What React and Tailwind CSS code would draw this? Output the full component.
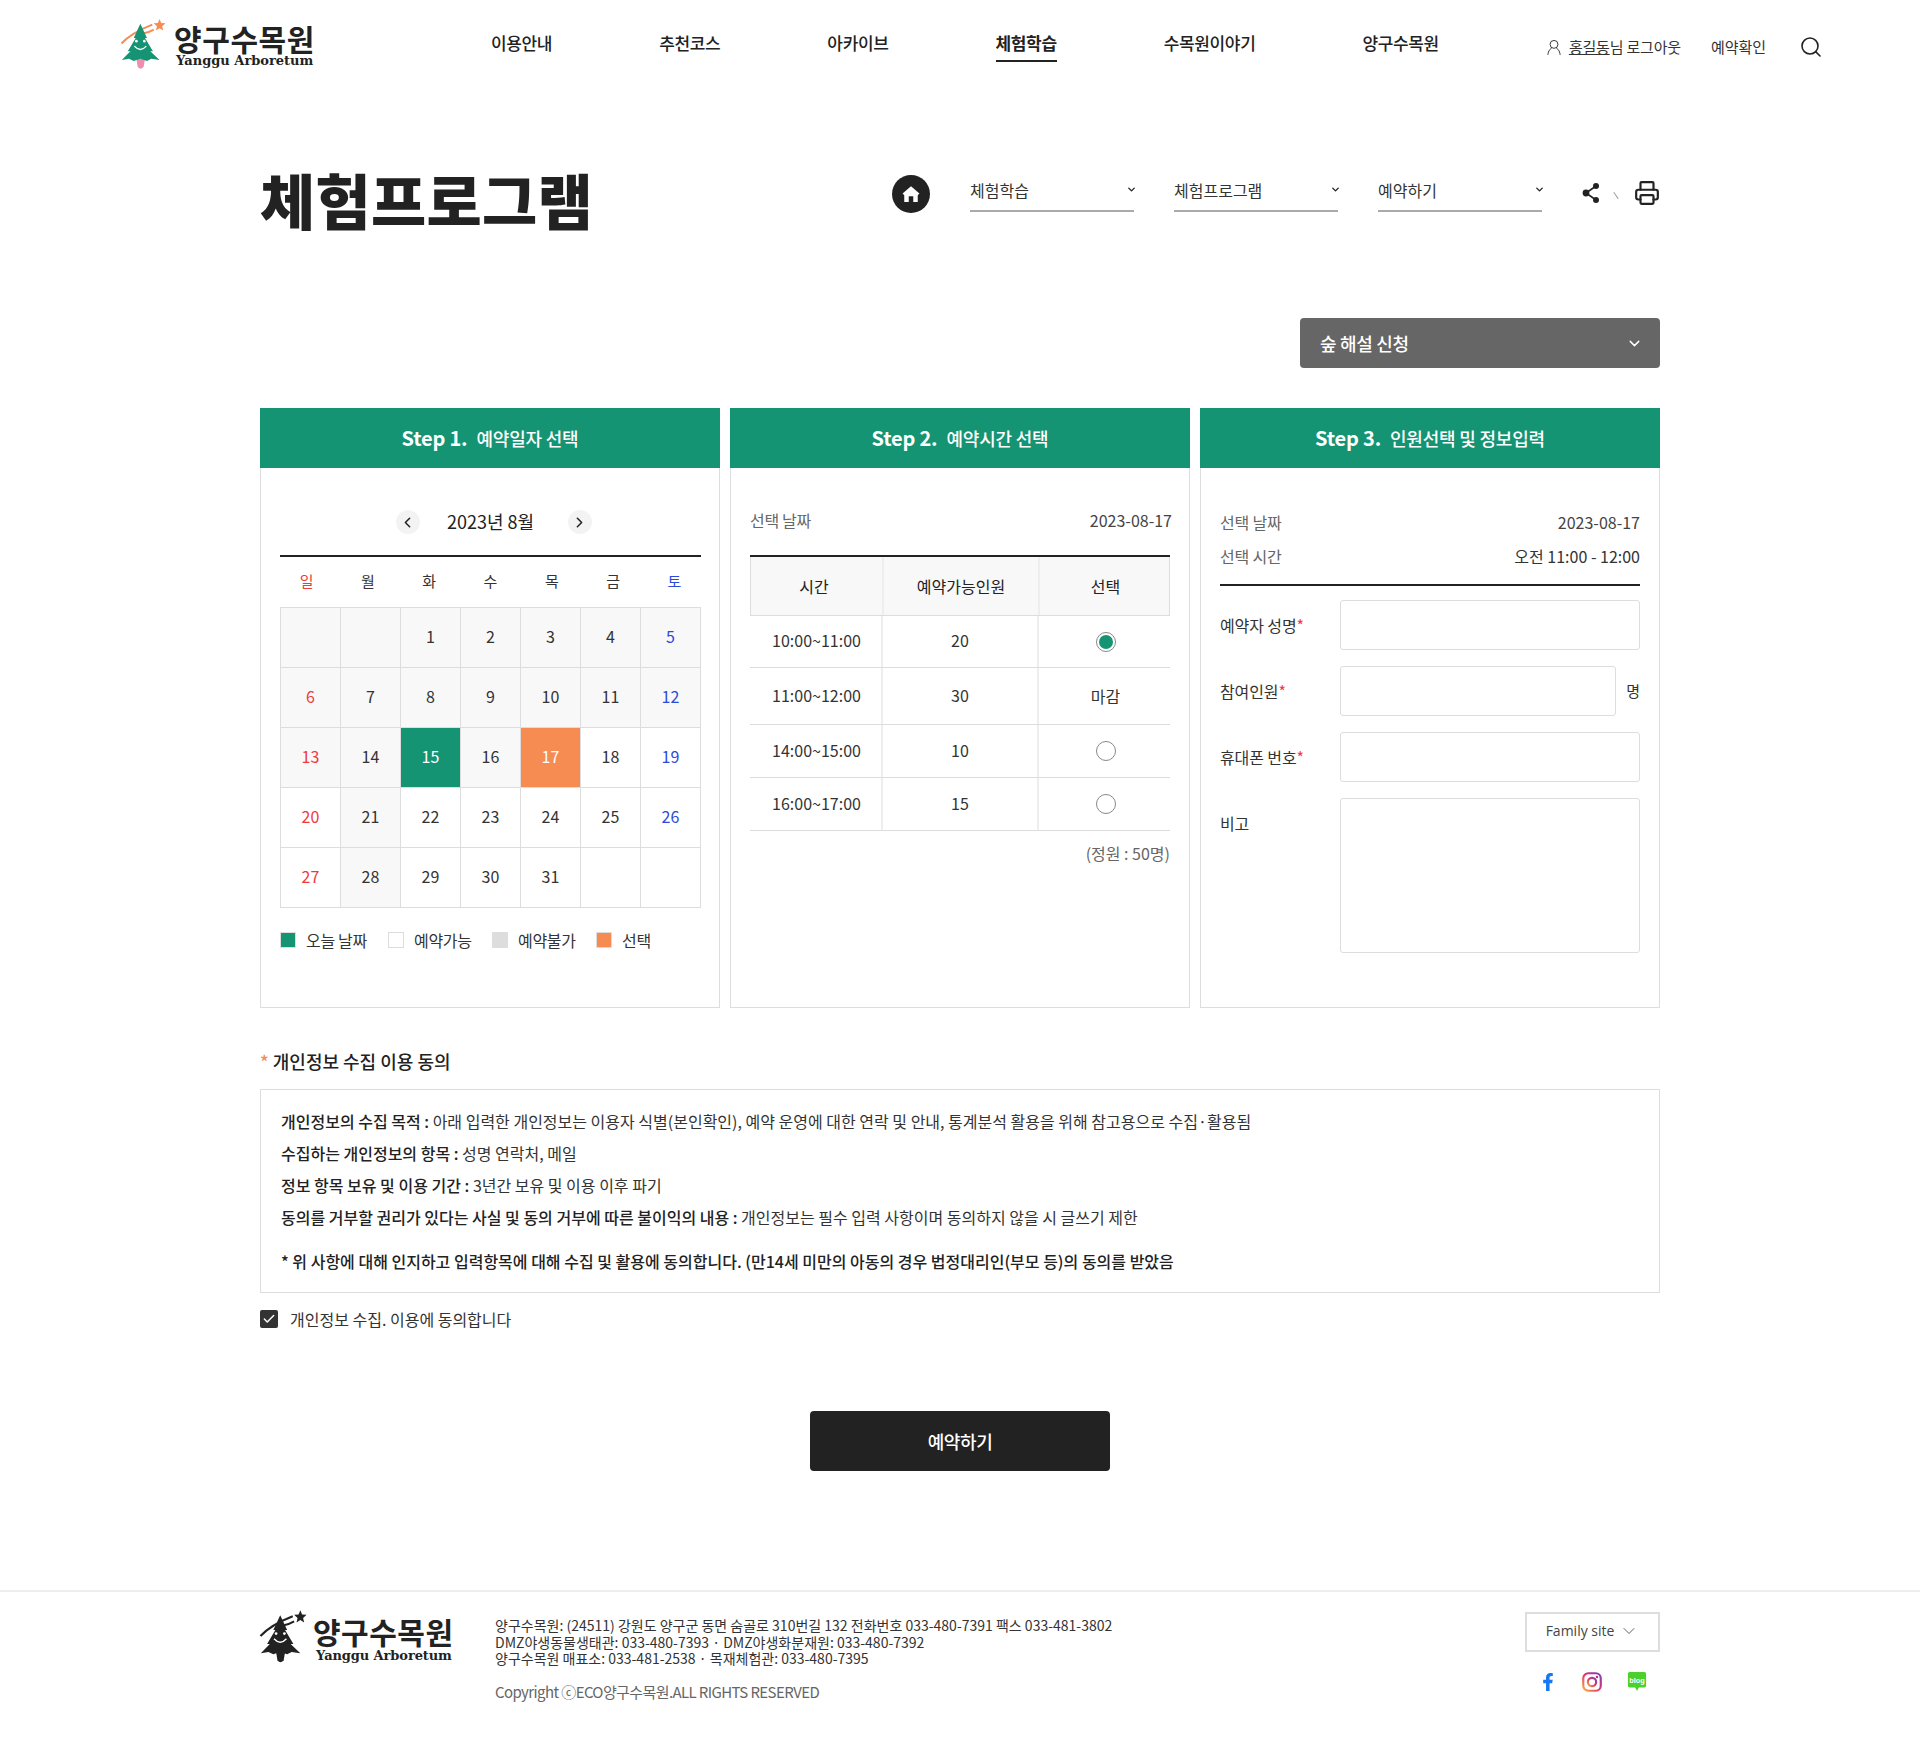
import React from 'react';
import { ChevronDown, ChevronLeft, ChevronRight, Check, Printer, Search } from 'lucide-react';
import { FaFacebookF } from 'react-icons/fa';

const navItems = ['이용안내', '추천코스', '아카이브', '체험학습', '수목원이야기', '양구수목원'];
const weekdays = [
  { label: '일', color: 'text-[#f03a3a]' },
  { label: '월' },
  { label: '화' },
  { label: '수' },
  { label: '목' },
  { label: '금' },
  { label: '토', color: 'text-[#2b4bd8]' },
];

// gray cells are the days that can't be booked
const days = [
  { grey: true }, { grey: true }, { n: 1, grey: true }, { n: 2, grey: true }, { n: 3, grey: true }, { n: 4, grey: true }, { n: 5, grey: true },
  { n: 6, grey: true }, { n: 7, grey: true }, { n: 8, grey: true }, { n: 9, grey: true }, { n: 10, grey: true }, { n: 11, grey: true }, { n: 12, grey: true },
  { n: 13, grey: true }, { n: 14, grey: true }, { n: 15, today: true }, { n: 16, grey: true }, { n: 17, picked: true }, { n: 18 }, { n: 19 },
  { n: 20 }, { n: 21, grey: true }, { n: 22 }, { n: 23 }, { n: 24 }, { n: 25 }, { n: 26 },
  { n: 27 }, { n: 28, grey: true }, { n: 29 }, { n: 30 }, { n: 31 }, {}, {},
];

const slots = [
  { time: '10:00~11:00', count: 20, state: 'on', height: 'h-[52px]' },
  { time: '11:00~12:00', count: 30, state: 'closed', height: 'h-[57px]' },
  { time: '14:00~15:00', count: 10, state: 'off', height: 'h-[53px]' },
  { time: '16:00~17:00', count: 15, state: 'off', height: 'h-[53px]' },
];

function Tree({ leaf, star, streak, trunk, face, className }) {
  return (
    <svg viewBox="25 25 150 160" className={className}>
      <path d="M35 102 C60 75 95 58 128 45" fill="none" stroke={streak} strokeWidth="6" />
      <path d="M100 72 C112 70 122 66 132 60" fill="none" stroke={streak} strokeWidth="6" />
      <path d="M80 148 H106 L102 172 Q92 184 84 172 Z" fill={trunk} />
      <path d="M92 42 L112 85 L106 85 L130 125 L122 125 L150 152 L125 148 L112 155 L92 148 L72 155 L58 148 L36 152 L62 125 L54 125 L78 85 L72 85 Z" fill={leaf} />
      <circle cx="80" cy="95" r="4" fill={face} />
      <circle cx="104" cy="95" r="4" fill={face} />
      <path d="M74 110 Q92 130 110 110" fill="none" stroke={face} strokeWidth="4" />
      <path d="M150 28 L155 40 L168 41 L158 50 L161 63 L150 56 L139 63 L142 50 L132 41 L145 40 Z" fill={star} />
    </svg>
  );
}

function BlogIcon() {
  return (
    <svg viewBox="0 0 22 24" className="w-[20px] h-[22px]">
      <path d="M3 1 H19 Q21 1 21 3 V16 Q21 18 19 18 H13 L11 22 L9 18 H3 Q1 18 1 16 V3 Q1 1 3 1 Z" fill="#4cd02a" />
      <text x="11" y="13" textAnchor="middle" fontSize="8" fontWeight="700" fill="#fff" fontFamily="Liberation Sans, sans-serif">blog</text>
    </svg>
  );
}

function InstagramIcon() {
  return (
    <svg viewBox="0 0 24 24" className="w-[20px] h-[20px]" fill="none">
      <defs>
        <linearGradient id="insta" x1="0" y1="1" x2="1" y2="0">
          <stop offset="0" stopColor="#fbb040" />
          <stop offset="0.5" stopColor="#e1306c" />
          <stop offset="1" stopColor="#7a3fc0" />
        </linearGradient>
      </defs>
      <rect x="1.5" y="1.5" width="21" height="21" rx="6" stroke="url(#insta)" strokeWidth="2.6" />
      <circle cx="12" cy="12" r="5" stroke="url(#insta)" strokeWidth="2.6" />
      <circle cx="18" cy="6" r="1.5" fill="#c9307f" />
    </svg>
  );
}

function Crumb({ label }) {
  return (
    <div className="w-[164px] h-[38px] border-b-2 border-[#aaa] flex items-start justify-between pt-[5px]">
      <span className="text-[16px] leading-[22px] text-[#333]">{label}</span>
      <ChevronDown className="w-[11px] h-[11px] mt-[5px] -mr-[3px] text-[#222]" strokeWidth={3} />
    </div>
  );
}

function StepPanel({ step, title, children }) {
  return (
    <section className="w-[460px] h-[600px] flex flex-col">
      <div className="h-[60px] bg-[#159474] text-white flex items-center justify-center gap-[9px]">
        <span className="text-[20px] font-bold tracking-[-0.2px]">Step {step}.</span>
        <span className="text-[18px] font-medium tracking-[-0.2px]">{title}</span>
      </div>
      <div className="flex-1 border border-t-0 border-[#ddd] px-[19px]">{children}</div>
    </section>
  );
}

function Calendar() {
  return (
    <div className="-mr-[1px]">
      <div className="mt-[42px] h-[24px] pl-[6px] flex items-center justify-center">
        <button className="w-[24px] h-[24px] rounded-full bg-[#f3f3f3] flex items-center justify-center">
          <ChevronLeft className="w-[17px] h-[17px] text-[#222]" strokeWidth={2.2} />
        </button>
        <span className="w-[148px] pr-[6px] pb-[2px] text-center text-[18px] text-[#222]">2023년 8월</span>
        <button className="w-[24px] h-[24px] rounded-full bg-[#f3f3f3] flex items-center justify-center">
          <ChevronRight className="w-[17px] h-[17px] text-[#222]" strokeWidth={2.2} />
        </button>
      </div>
      <div className="mt-[21px] border-t-2 border-[#222]">
        <div className="grid grid-cols-7 h-[50px] items-center pb-[2px] -mx-[4px]">
          {weekdays.map(d => (
            <span key={d.label} className={`text-center text-[15px] ${d.color || 'text-[#333]'}`}>{d.label}</span>
          ))}
        </div>
        <div className="grid grid-cols-7 border-t border-l border-[#ddd]">
          {days.map((d, idx) => {
            let tone = 'bg-white text-[#333]';
            if (idx % 7 === 0) tone = 'bg-white text-[#f03a3a]';
            if (idx % 7 === 6) tone = 'bg-white text-[#2b4bd8]';
            if (d.grey) tone = tone.replace('bg-white', 'bg-[#f8f8f8]');
            if (d.today) tone = 'bg-[#159474] text-white';
            if (d.picked) tone = 'bg-[#f78c53] text-white';
            return (
              <div key={idx} className={`h-[60px] pb-[3px] border-r border-b border-[#ddd] flex items-center justify-center text-[16px] ${tone}`}>
                {d.n}
              </div>
            );
          })}
        </div>
      </div>
      <div className="mt-[24px] h-[16px] flex items-center text-[16px] text-[#333] tracking-[-0.3px]">
        <i className="w-[16px] h-[16px] bg-[#159474] border border-[#ddd]" />
        <span className="ml-[10px] w-[82px]">오늘 날짜</span>
        <i className="w-[16px] h-[16px] bg-white border border-[#ddd]" />
        <span className="ml-[10px] w-[78px]">예약가능</span>
        <i className="w-[16px] h-[16px] bg-[#ddd] border border-[#ddd]" />
        <span className="ml-[10px] w-[78px]">예약불가</span>
        <i className="w-[16px] h-[16px] bg-[#f78c53] border border-[#ddd]" />
        <span className="ml-[10px]">선택</span>
      </div>
    </div>
  );
}

function Radio({ checked }) {
  return (
    <span className="w-[20px] h-[20px] rounded-full border border-[#888] bg-white flex items-center justify-center">
      {checked && <span className="w-[14px] h-[14px] rounded-full bg-[#159474]" />}
    </span>
  );
}

function TimeTable() {
  return (
    <div>
      <div className="mt-[40px] h-[24px] flex items-center justify-between text-[16px]">
        <span className="text-[#666] tracking-[-0.3px]">선택 날짜</span>
        <span className="text-[#444] -mr-[2px]">2023-08-17</span>
      </div>
      <div className="mt-[23px] border-t-2 border-[#222] text-[16px] text-[#333]">
        <div className="h-[59px] grid grid-cols-[131px_156px_131px] bg-[#f8f8f8] border border-t-0 border-[#ddd] text-[#222]">
          <div className="flex items-center justify-center pr-[5px]">시간</div>
          <div className="flex items-center justify-center border-l-2 border-[#eee]">예약가능인원</div>
          <div className="flex items-center justify-center pl-[2px] border-l-2 border-[#eee]">선택</div>
        </div>
        {slots.map(s => (
          <div key={s.time} className={`grid grid-cols-[131px_156px_133px] border-b border-[#ddd] ${s.height}`}>
            <div className="flex items-center justify-center pl-[2px] pb-[3px]">{s.time}</div>
            <div className="flex items-center justify-center pb-[3px] border-l-2 border-[#eee]">{s.count}</div>
            <div className="flex items-center justify-center pl-[2px] border-l-2 border-[#eee]">
              {s.state === 'closed' ? '마감' : <Radio checked={s.state === 'on'} />}
            </div>
          </div>
        ))}
        <p className="mt-[10px] text-right text-[#666] text-[16px] leading-[24px]">(정원 : 50명)</p>
      </div>
    </div>
  );
}

function FormRow({ label, required, children, top }) {
  return (
    <div className={`flex ${top ? 'items-start' : 'items-center'}`}>
      <label className={`w-[120px] text-[16px] tracking-[-0.1px] text-[#333] ${top ? 'mt-[13px]' : ''}`}>
        {label}
        {required && <span className="text-[#f03a3a]">*</span>}
      </label>
      {children}
    </div>
  );
}

function ReserveForm() {
  const inputClass = 'h-[50px] flex-1 min-w-0 rounded-[3px] border border-[#ddd] bg-white';
  return (
    <div>
      <div className="mt-[42px] flex flex-col gap-[10px] text-[16px]">
        <div className="h-[24px] flex items-center justify-between">
          <span className="text-[#666] tracking-[-0.2px]">선택 날짜</span>
          <span className="text-[#444]">2023-08-17</span>
        </div>
        <div className="h-[24px] flex items-center justify-between">
          <span className="text-[#666] tracking-[-0.2px]">선택 시간</span>
          <span className="text-[#333]">오전 11:00 - 12:00</span>
        </div>
      </div>
      <div className="mt-[16px] border-t-2 border-[#222] pt-[14px] flex flex-col gap-[16px]">
        <FormRow label="예약자 성명" required>
          <input className={inputClass} />
        </FormRow>
        <FormRow label="참여인원" required>
          <input className={inputClass} />
          <span className="w-[24px] text-right text-[15px] text-[#333]">명</span>
        </FormRow>
        <FormRow label="휴대폰 번호" required>
          <input className={inputClass} />
        </FormRow>
        <FormRow label="비고" top>
          <textarea className="h-[155px] flex-1 min-w-0 rounded-[3px] border border-[#ddd] bg-white resize-none" />
        </FormRow>
      </div>
    </div>
  );
}

export default function App() {
  return (
    <div className="w-[1920px] h-[1746px] bg-white text-[#222] font-['Noto_Sans_CJK_KR','Noto_Sans',sans-serif] overflow-hidden">
      <header className="h-[90px] flex items-start">
        <div className="w-[491px] pl-[120px] pt-[20px] flex">
          <Tree leaf="#159474" star="#f78c53" streak="#f78c53" trunk="#ee8fb0" face="#fff" className="w-[50px] h-[53px] -ml-[2px] -mt-[2px]" />
          <div className="ml-[6px] pt-[2px] flex flex-col">
            <span className="text-[30px] leading-[33px] font-bold text-[#222] tracking-[0.6px] whitespace-nowrap">양구수목원</span>
            <span className="ml-[2px] -mt-[1px] text-[13px] leading-[14px] font-['DejaVu_Serif',serif] font-bold text-[#222] whitespace-nowrap">Yanggu Arboretum</span>
          </div>
        </div>
        <nav className="flex gap-[107px] pt-[31px]">
          {navItems.map((item, idx) => (
            <a key={item} className={`h-[31px] text-[17px] leading-[24px] tracking-[-0.35px] whitespace-nowrap ${idx === 3 ? 'font-bold border-b-2 border-[#222]' : 'font-medium'}`}>
              {item}
            </a>
          ))}
        </nav>
        <div className="ml-[108px] pt-[35px] flex items-center text-[15px] leading-[22px] text-[#333] whitespace-nowrap">
          <svg viewBox="0 0 16 18" className="w-[14px] h-[16px] mr-[8px]" fill="none" stroke="#333" strokeWidth="1.1">
            <circle cx="8" cy="6" r="4.5" />
            <path d="M1 18 C1.5 13 4 11 5.5 10 M15 18 C14.5 13 12 11 10.5 10" />
          </svg>
          <span className="tracking-[-0.2px]"><u>홍길동</u>님 로그아웃</span>
          <span className="ml-[30px]">예약확인</span>
          <Search className="ml-[33px] w-[24px] h-[24px] text-[#222]" strokeWidth={1.6} />
        </div>
      </header>

      <main className="w-[1400px] mx-auto">
        <div className="pt-[80px] h-[228px] flex items-start justify-between">
          <h1 className="-mt-[2px] text-[60px] leading-[62px] font-black text-[#222] tracking-[0.3px] whitespace-nowrap">체험프로그램</h1>
          <div className="flex items-start pt-[4px]">
            <span className="mt-[1px] w-[38px] h-[38px] rounded-full bg-[#222] flex items-center justify-center mr-[40px]">
              <svg viewBox="0 0 16 16" className="w-[18px] h-[18px]">
                <path d="M8 1 L15.5 7.5 L14 9 V15 H10 V10 H6 V15 H2 V9 L0.5 7.5 Z" fill="#fff" />
              </svg>
            </span>
            <div className="flex gap-[40px]">
              <Crumb label="체험학습" />
              <Crumb label="체험프로그램" />
              <Crumb label="예약하기" />
            </div>
            <svg viewBox="0 0 20 22" className="w-[20px] h-[22px] ml-[39px] mt-[8px]" fill="none" stroke="#222" strokeWidth="1.6">
              <path d="M15 4 L5 11 L15 18" />
              <circle cx="15" cy="4" r="3" fill="#222" stroke="none" />
              <circle cx="5" cy="11" r="3.4" fill="#222" stroke="none" />
              <circle cx="15" cy="18" r="3" fill="#222" stroke="none" />
            </svg>
            <span className="w-[8px] h-[1px] bg-[#999] rotate-[55deg] ml-[11px] mt-[21px]" />
            <Printer className="w-[26px] h-[26px] ml-[14px] mt-[6px] text-[#222]" strokeWidth={2} />
          </div>
        </div>

        <div className="flex justify-end">
          <button className="w-[360px] h-[50px] rounded-[4px] bg-[#666] text-white pl-[20px] pr-[17px] flex items-center justify-between">
            <span className="text-[18px] font-medium tracking-[-0.3px]">숲 해설 신청</span>
            <ChevronDown className="w-[17px] h-[17px]" strokeWidth={2} />
          </button>
        </div>

        <div className="mt-[40px] flex gap-[10px]">
          <StepPanel step={1} title="예약일자 선택"><Calendar /></StepPanel>
          <StepPanel step={2} title="예약시간 선택"><TimeTable /></StepPanel>
          <StepPanel step={3} title="인원선택 및 정보입력"><ReserveForm /></StepPanel>
        </div>

        <h2 className="mt-[41px] h-[24px] text-[18px] leading-[24px] font-medium">
          <span className="text-[#f78c53]">*</span> 개인정보 수집 이용 동의
        </h2>
        <div className="mt-[16px] h-[204px] border border-[#ddd] px-[20px] pt-[15px] text-[16px] leading-[32px] text-[#333] whitespace-nowrap">
          <p><b className="font-medium text-[#222]">개인정보의 수집 목적 :</b> 아래 입력한 개인정보는 이용자 식별(본인확인), 예약 운영에 대한 연락 및 안내, 통계분석 활용을 위해 참고용으로 수집·활용됨</p>
          <p><b className="font-medium text-[#222]">수집하는 개인정보의 항목 :</b> 성명 연락처, 메일</p>
          <p><b className="font-medium text-[#222]">정보 항목 보유 및 이용 기간 :</b> 3년간 보유 및 이용 이후 파기</p>
          <p><b className="font-medium text-[#222]">동의를 거부할 권리가 있다는 사실 및 동의 거부에 따른 불이익의 내용 :</b> 개인정보는 필수 입력 사항이며 동의하지 않을 시 글쓰기 제한</p>
          <p className="mt-[12px] font-medium text-[#222]">* 위 사항에 대해 인지하고 입력항목에 대해 수집 및 활용에 동의합니다. (만14세 미만의 아동의 경우 법정대리인(부모 등)의 동의를 받았음</p>
        </div>
        <div className="mt-[15px] flex items-center gap-[12px]">
          <span className="w-[18px] h-[18px] rounded-[2px] bg-[#333] flex items-center justify-center">
            <Check className="w-[14px] h-[14px] text-white" strokeWidth={2.5} />
          </span>
          <span className="text-[16px] leading-[22px] text-[#333]">개인정보 수집. 이용에 동의합니다</span>
        </div>
        <div className="mt-[81px] flex justify-center">
          <button className="w-[300px] h-[60px] rounded-[4px] bg-[#222] text-white text-[18px] font-medium tracking-[-0.4px]">예약하기</button>
        </div>
      </main>

      <footer className="mt-[119px] border-t-2 border-[#eee]">
        <div className="w-[1400px] mx-auto flex items-start">
          <div className="w-[235px] pt-[21px] flex">
            <Tree leaf="#222" star="#222" streak="#222" trunk="#222" face="#fff" className="w-[52px] h-[56px] -ml-[3px] -mt-[4px]" />
            <div className="ml-[4px] flex flex-col pt-[2px]">
              <span className="text-[30px] leading-[32px] font-bold text-[#222] tracking-[0.5px] whitespace-nowrap">양구수목원</span>
              <span className="ml-[3px] mt-[2px] text-[13px] leading-[14px] font-['DejaVu_Serif',serif] font-bold text-[#222] tracking-[-0.1px] whitespace-nowrap">Yanggu Arboretum</span>
            </div>
          </div>
          <div className="pt-[25px] text-[14px] leading-[16.5px] text-[#333] whitespace-nowrap">
            <p>양구수목원: (24511) 강원도 양구군 동면 숨골로 310번길 132 전화번호 033-480-7391 팩스 033-481-3802</p>
            <p>DMZ야생동물생태관: 033-480-7393 · DMZ야생화분재원: 033-480-7392</p>
            <p>양구수목원 매표소: 033-481-2538 · 목재체험관: 033-480-7395</p>
            <p className="mt-[17px] text-[#666] text-[15px] tracking-[-0.6px]">Copyright ⓒECO양구수목원.ALL RIGHTS RESERVED</p>
          </div>
          <div className="ml-auto pt-[20px] w-[135px] flex flex-col">
            <div className="h-[40px] pb-[3px] border-2 border-[#ddd] flex items-center justify-center gap-[5px] text-[14px] text-[#444] font-['Open_Sans',sans-serif]">
              Family site
              <ChevronDown className="w-[20px] h-[20px]" strokeWidth={1} />
            </div>
            <div className="mt-[19px] pl-[14px] flex items-center gap-[25px]">
              <FaFacebookF className="w-[18px] h-[18px] text-[#1877f2]" />
              <InstagramIcon />
              <BlogIcon />
            </div>
          </div>
        </div>
      </footer>
    </div>
  );
}
